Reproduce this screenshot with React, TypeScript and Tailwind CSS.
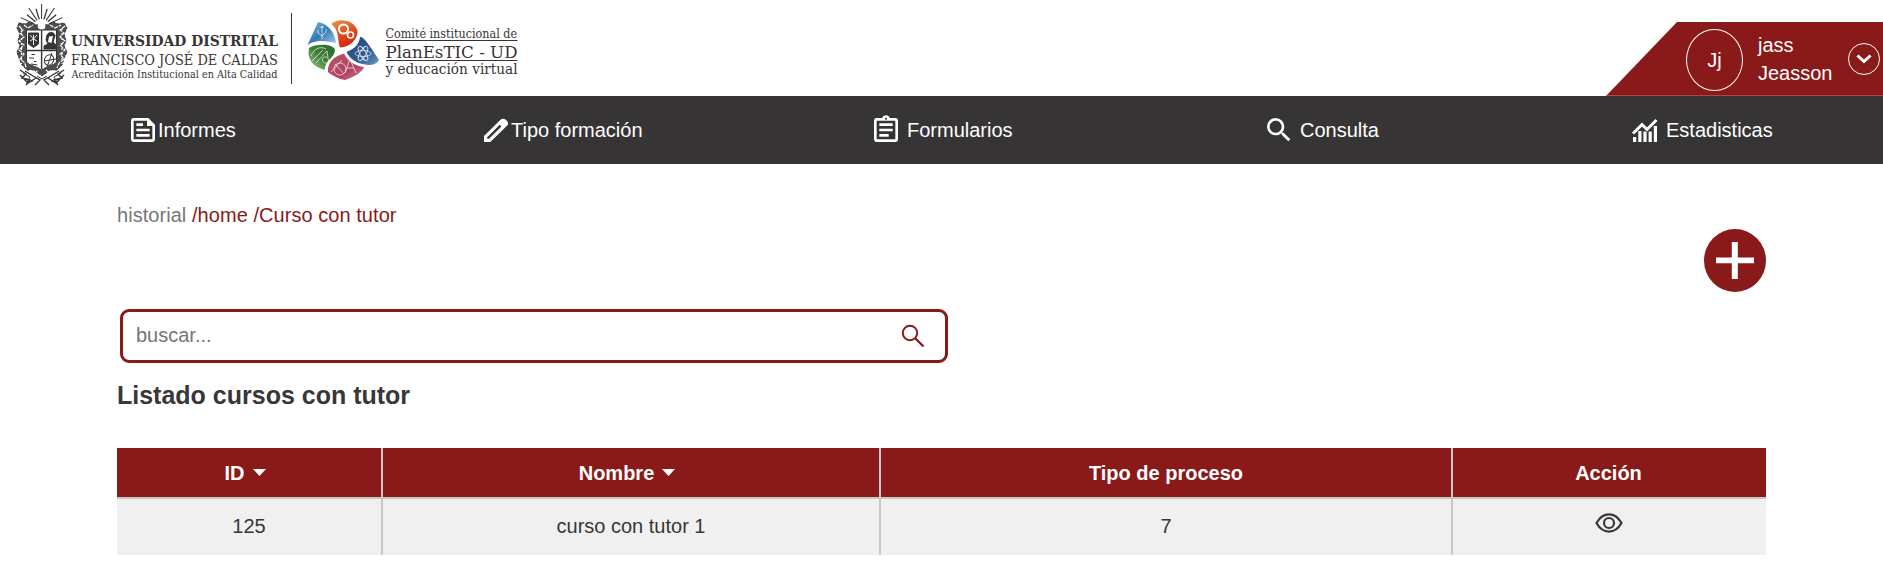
import React from "react";
import { MdOutlineFeed, MdOutlineAssignment, MdSearch } from "react-icons/md";

function Shield() {
  const rays = [-66, -50, -34, -17, 0, 17, 34, 50, 66];
  return (
    <svg width="54" height="86" viewBox="0 0 54 86" className="shrink-0 text-[#373435]" fill="none" stroke="currentColor">
      {rays.map((a, i) => (
        <path key={a} d={i % 2 === 0 ? "M25.600 15V0" : "M25.600 15V4"} strokeWidth={i % 2 === 0 ? 1 : 1.3} transform={`rotate(${a} 25.600 23)`} />
      ))}
      <path d="M3 19L9 20L14 18L19 21L25 20L32 21L37 18L42 20L48 19L51 24L48 30L50 37L48 42L51 48L48 54L46 61L41 66L34 66L26 72L18 66L11 66L6 61L3 54L1 48L4 42L2 37L4 30L1 24Z" fill="currentColor" fillOpacity=".88" strokeWidth="1" strokeDasharray="3 1" />
      <path d="M3 22L7 26L4 29L8 33L3 37L8 41L3 46L8 50L4 55L9 59L10 64M49 22L44 26L48 29L44 33L49 37L44 41L49 46L44 50L48 55L43 59L41 64M8 21L12 24L17 21M34 21L39 24L45 21M14 66L19 69L22 66M30 66L34 69L38 66" stroke="#fff" strokeWidth="1.2" strokeDasharray="4 1" />
      <path d="M5.500 24V60M46 24V60" stroke="#fff" strokeWidth="1.200" strokeDasharray="2 3" />
      <path d="M4 66L10 70L6 74L14 76L10 81M48 66L42 70L46 74L38 76L42 81M9 67L17 72L24 76L19 81M43 67L35 72L28 76L33 81M4 71L12 79L20 74M48 71L40 79L32 74" strokeWidth="1.4" />
      <path d="M7 69L14 73L11 78L17 77M45 69L38 73L41 78L35 77M21 72L26 75L31 72" strokeWidth="1" />
      <circle cx="25.600" cy="22" r="3.800" fill="#fff" stroke="none" />
      <path d="M10.500 26H40.500V57C40.500 61 31 62 25.600 66C20 62 10.500 61 10.500 57Z" fill="#fff" />
      <path d="M10.500 46.500H40.500M25.600 26V65" strokeWidth="1.4" />
      <path d="M12.500 29H22.500V40L17.500 43.500L12.500 40Z" fill="currentColor" />
      <path d="M14 31L17.500 35L21 31M17.500 31V41M14 37L17.500 35L21 37" stroke="#fff" strokeWidth=".9" />
      <path d="M28 45V42L32 40L30 36L31 31C33 27 39 28 39 32L37 38L40 41V45Z" fill="currentColor" />
      <path d="M33 32.500L37 32L35.500 39L32 38Z" fill="#fff" stroke="none" />
      <ellipse cx="33" cy="56" rx="4.500" ry="5.500" transform="rotate(25 33 56)" />
      <path d="M28 57L40 55M31 63L36 49" />
      <path d="M15.500 50.500H19M13 54H18M18 57.500H20.500M15 60L21.500 61" strokeWidth="1.2" />
    </svg>
  );
}

function PlanesticMark() {
  return (
    <svg width="74" height="64" viewBox="0 0 74 64" className="shrink-0" strokeWidth="1" fill="none">
      <defs>
        <linearGradient id="blue" x1="0" y1="0" x2="1" y2="1"><stop offset="0" stopColor="#8fc4e6" /><stop offset=".5" stopColor="#3378b5" /><stop offset="1" stopColor="#a9d2ec" /></linearGradient>
        <linearGradient id="orange" x1="0" y1="0" x2="0.4" y2="1"><stop offset="0" stopColor="#e39a4e" /><stop offset=".6" stopColor="#de4a1c" /><stop offset="1" stopColor="#d42a12" /></linearGradient>
        <linearGradient id="navy" x1="0" y1="0" x2="1" y2="1"><stop offset="0" stopColor="#284a7d" /><stop offset=".6" stopColor="#2f5a8f" /><stop offset="1" stopColor="#6f9cc8" /></linearGradient>
        <linearGradient id="green" x1="1" y1="0" x2="0" y2="1"><stop offset="0" stopColor="#276b2d" /><stop offset=".5" stopColor="#3d7d35" /><stop offset="1" stopColor="#b3cf94" /></linearGradient>
        <linearGradient id="rose" x1="0" y1="0" x2="1" y2="1"><stop offset="0" stopColor="#b9586e" /><stop offset=".6" stopColor="#b04160" /><stop offset="1" stopColor="#d07890" /></linearGradient>
      </defs>
      <path d="M1.500 27L12 4C20 5 29 13 30 25C20 23 10 21 1.500 27Z" fill="url(#blue)" />
      <path d="M25.500 6C32-1 49 2 51.500 13C52 19 46 29 34 29.500C31 22 34 13 25.500 6Z" fill="url(#orange)" />
      <path d="M54 19C57 18 62 25 73 42C70 47 64 48 57 46C50 45 44 41 40.500 34C48 31 53 27 54 19Z" fill="url(#navy)" />
      <path d="M18.500 52C5 48 1 40 3 30C10 26 25 25 29 31.500C29 40 19 42 18.500 52Z" fill="url(#green)" />
      <path d="M22 54C21 45 28 38 38 35.500C42 44 50 48 58 49C57 54 46 60 39 62C32 61 26 57 22 54Z" fill="url(#rose)" />
      <g stroke="#fff">
        <path d="M16 21V8M12 12V15L16 18L20 14V11M14.500 10L16 8L17.500 10" strokeOpacity=".7" />
        <circle cx="37.500" cy="11" r="4.600" strokeWidth="2" />
        <circle cx="44.500" cy="17" r="3" strokeWidth="1.600" />
        <g strokeOpacity=".75" strokeWidth=".9">
          <ellipse cx="57" cy="35.500" rx="8" ry="3" /><ellipse cx="57" cy="35.500" rx="8" ry="3" transform="rotate(60 57 35.500)" /><ellipse cx="57" cy="35.500" rx="8" ry="3" transform="rotate(120 57 35.500)" />
          <path d="M5 38C8 30 15 28 20 31M6 43L17 32M10 45L21 33L22 40M17 40C20 37 24 41 22 44C20 47 15 44 17 40Z" />
          <circle cx="34" cy="51" r="6" /><path d="M25 54L36 42M44 41L50 55M44 41L39 55M29 46L38 56M41 50H48" />
        </g>
      </g>
    </svg>
  );
}

function PencilIcon() {
  return (
    <svg width="32" height="32" viewBox="0 0 32 32" fill="currentColor" className="-mr-px">
      <path fillRule="evenodd" d="M4 28V22L20.500 5.800C22 4.300 24 4.300 25.500 5.500L27 7C28.500 8.500 28.500 10.300 27 11.800L10.300 28ZM7.200 24.800H9L21.500 12.500L19.700 10.700L7.200 23.200Z" />
    </svg>
  );
}

function StatsIcon() {
  return (
    <svg width="32" height="32" viewBox="0 0 32 32" fill="none" stroke="currentColor">
      <path d="M3 19.500L12 10.500L17 15.500L26.500 6" strokeWidth="3" />
      <path d="M4.600 28V23M9.900 28V17M15 28V17.500M20.200 28V17.500M25.400 28V12" strokeWidth="3.200" />
    </svg>
  );
}

const nav = [
  { label: "Informes", icon: <MdOutlineFeed size={32} className="-mr-px" />, box: "w-[353px]" },
  { label: "Tipo formación", icon: <PencilIcon />, box: "w-[390px]" },
  { label: "Formularios", icon: <MdOutlineAssignment size={32} />, box: "w-[393px] gap-[5px]" },
  { label: "Consulta", icon: <MdSearch size={32} />, box: "w-[367px] gap-[5px]" },
  { label: "Estadisticas", icon: <StatsIcon />, box: "gap-1" },
];

function Caret() {
  return (
    <svg width="13" height="7" viewBox="0 0 13 7" fill="currentColor"><path d="M0 0H13L6.500 7Z" /></svg>
  );
}

export default function App() {
  return (
    <div className="h-[586px] w-full overflow-hidden bg-white font-['Liberation_Sans',Arial,sans-serif] text-xl text-[#373737]">
      <header className="flex h-24 justify-between">
        <div className="flex items-start text-[#373435]">
          <div className="flex pl-4 pt-1"><Shield /></div>
          <svg width="208" height="52" className="mt-[31px] overflow-visible" fill="currentColor" fontFamily="DejaVu Serif, serif">
            <text x="1" y="15" fontSize="15.500" fontWeight="700" textLength="207" lengthAdjust="spacingAndGlyphs">UNIVERSIDAD DISTRITAL</text>
            <text x="1" y="33.500" fontSize="15.500" textLength="207" lengthAdjust="spacingAndGlyphs">FRANCISCO JOSÉ DE CALDAS</text>
            <text x="1.500" y="47" fontSize="11.500" textLength="206" lengthAdjust="spacingAndGlyphs">Acreditación Institucional en Alta Calidad</text>
          </svg>
          <div className="ml-[13px] mt-[13px] h-[71px] w-px bg-[#373435]" />
          <div className="ml-[14px] mt-[18px] flex"><PlanesticMark /></div>
          <svg width="134" height="60" className="ml-1 mt-[24px] overflow-visible" fill="currentColor" fontFamily="DejaVu Serif, serif">
            <text x="1.500" y="14" fontSize="12.500" textLength="131.500" lengthAdjust="spacingAndGlyphs">Comité institucional de</text>
            <path d="M2 16H133.500V17H2ZM2 36H133.500V37H2Z" />
            <text x="1.500" y="33.500" fontSize="17.500" textLength="132" lengthAdjust="spacingAndGlyphs">PlanEsTIC - UD</text>
            <text x="1.500" y="50" fontSize="14" textLength="132" lengthAdjust="spacingAndGlyphs">y educación virtual</text>
          </svg>
        </div>
        <div className="mt-[22px] flex h-[74px] w-[277px] items-start border-b border-[#a84a4a] bg-[#8a1919] text-white [clip-path:polygon(71px_0,100%_0,100%_100%,0_100%)]">
          <div className="ml-20 mt-[7px] flex h-[62px] w-[57px] items-center justify-center rounded-[50%] border border-white">Jj</div>
          <div className="ml-[15px] mt-[9px] w-[90px] leading-7">jass<br />Jeasson</div>
          <button className="mt-[21px] flex size-8 items-center justify-center rounded-full border border-white">
            <svg width="16" height="10" viewBox="0 0 16 10" fill="none" stroke="currentColor" strokeWidth="3"><path d="M1.500 1.500L8 7.500L14.500 1.500" /></svg>
          </button>
        </div>
      </header>
      <nav className="flex h-[68px] items-center bg-[#373435] pl-[127px] text-white">
        {nav.map((n) => (
          <a key={n.label} className={`flex items-center ${n.box}`}>{n.icon}<span>{n.label}</span></a>
        ))}
      </nav>
      <main className="mx-[117px] w-[1649px]">
        <div className="flex h-[65px] items-end">
          <p className="tracking-[0.05px] text-[#8a1919]"><span className="text-[#777777]">historial</span> /home /Curso con tutor</p>
        </div>
        <div className="flex justify-end">
          <button className="flex h-[63px] w-[62px] items-center justify-center rounded-[50%] bg-[#8a1919] text-white">
            <svg width="38" height="38" viewBox="0 0 38 38" fill="currentColor"><path d="M15.800 0h6v15.500H38v5.800H21.800v15.700h-6V21.300H0V15.500h15.800z" /></svg>
          </button>
        </div>
        <div className="ml-[3px] mt-[17px] flex h-[54px] w-[828px] items-center justify-between rounded-[9px] border-[3px] border-[#8a1919] pl-[13px] pr-5 text-[#757575]">
          <span className="pb-0.5">buscar...</span>
          <svg width="24" height="24" viewBox="0 0 24 24" fill="none" stroke="#8a1919" strokeWidth="2"><circle cx="9" cy="9" r="7.200" /><path d="M14 14L22.500 22.500" strokeWidth="2.300" /></svg>
        </div>
        <h1 className="mt-[18px] text-[25px] font-bold leading-7">Listado cursos con tutor</h1>
        <table className="mt-[39px] w-full table-fixed border-collapse text-center">
          <colgroup><col className="w-[265px]" /><col className="w-[498px]" /><col className="w-[572px]" /><col /></colgroup>
          <thead>
            <tr className="h-[50px] bg-[#8a1919] text-white">
              <th className="border-b-2 border-r-2 border-[#c8c8c8] pr-2"><span className="inline-flex items-center gap-2">ID <Caret /></span></th>
              <th className="border-b-2 border-r-2 border-[#c8c8c8] pr-2"><span className="inline-flex items-center gap-2">Nombre <Caret /></span></th>
              <th className="border-b-2 border-r-2 border-[#c8c8c8]">Tipo de proceso</th>
              <th className="border-b-2 border-[#c8c8c8] pr-[2px]">Acción</th>
            </tr>
          </thead>
          <tbody>
            <tr className="h-[57px] bg-[#f0f0f0]">
              <td className="border-r-2 border-[#c8c8c8] pb-[3px]">125</td>
              <td className="border-r-2 border-[#c8c8c8] pb-[3px]">curso con tutor 1</td>
              <td className="border-r-2 border-[#c8c8c8] pb-[3px]">7</td>
              <td className="pr-[2px]">
                <svg width="28" height="20" viewBox="0 0 28 20" fill="none" stroke="currentColor" strokeWidth="2.200" className="mx-auto mb-2"><path d="M1.500 10C8-1.500 20-1.500 26.500 10C20 21.500 8 21.500 1.500 10Z" /><circle cx="14" cy="10" r="5" /></svg>
              </td>
            </tr>
          </tbody>
        </table>
      </main>
    </div>
  );
}
